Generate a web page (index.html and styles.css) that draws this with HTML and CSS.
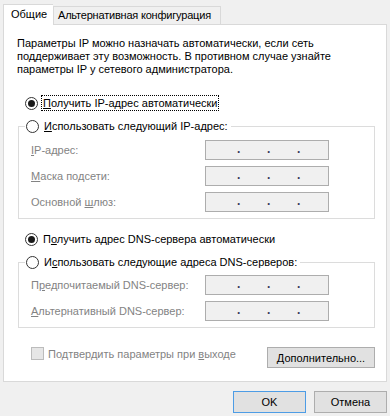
FILE: index.html
```html
<!DOCTYPE html>
<html lang="ru">
<head>
<meta charset="utf-8">
<link rel="stylesheet" href="styles.css">
</head>
<body>
<div class="dialog">
  <div class="tabs">
    <div class="tab active">Общие</div>
    <div class="tab">Альтернативная конфигурация</div>
  </div>
  <div class="panel">
    <p class="intro">Параметры IP можно назначать автоматически, если сеть поддерживает эту возможность. В противном случае узнайте параметры IP у сетевого администратора.</p>

    <div class="radio-row first">
      <span class="radio checked"></span>
      <span class="rlabel focus"><u>П</u>олучить IP-адрес автоматически</span>
    </div>

    <fieldset class="group">
      <legend class="radio-row">
        <span class="radio"></span>
        <span class="rlabel"><u>И</u>спользовать следующий IP-адрес:</span>
      </legend>
      <div class="rows">
        <div class="field"><span class="flabel"><u>I</u>P-адрес:</span><span class="ipbox"><span class="dot">.</span><span class="dot">.</span><span class="dot">.</span></span></div>
        <div class="field"><span class="flabel"><u>М</u>аска подсети:</span><span class="ipbox"><span class="dot">.</span><span class="dot">.</span><span class="dot">.</span></span></div>
        <div class="field"><span class="flabel">Основной <u>ш</u>люз:</span><span class="ipbox"><span class="dot">.</span><span class="dot">.</span><span class="dot">.</span></span></div>
      </div>
    </fieldset>

    <div class="radio-row dns">
      <span class="radio checked"></span>
      <span class="rlabel">П<u>о</u>лучить адрес DNS-сервера автоматически</span>
    </div>

    <fieldset class="group">
      <legend class="radio-row">
        <span class="radio"></span>
        <span class="rlabel">И<u>с</u>пользовать следующие адреса DNS-серверов:</span>
      </legend>
      <div class="rows dnsrows">
        <div class="field"><span class="flabel">П<u>р</u>едпочитаемый DNS-сервер:</span><span class="ipbox"><span class="dot">.</span><span class="dot">.</span><span class="dot">.</span></span></div>
        <div class="field"><span class="flabel"><u>А</u>льтернативный DNS-сервер:</span><span class="ipbox"><span class="dot">.</span><span class="dot">.</span><span class="dot">.</span></span></div>
      </div>
    </fieldset>

    <div class="bottom-row">
      <div class="check-wrap">
        <span class="checkbox"></span>
        <span class="clabel">Подтвердить параметры при <u>в</u>ыходе</span>
      </div>
      <button class="btn adv"><u>Д</u>ополнительно...</button>
    </div>
  </div>
  <div class="actions">
    <button class="btn main default">OK</button>
    <button class="btn main">Отмена</button>
  </div>
</div>
</body>
</html>
```
FILE: styles.css
```css
* { box-sizing: border-box; }
html, body { margin: 0; padding: 0; }
body {
  width: 390px;
  height: 416px;
  background: #f0f0f0;
  font-family: "Liberation Sans", Arial, sans-serif;
  font-size: 11px;
  color: #000;
  overflow: hidden;
}
u { text-decoration: underline; text-underline-offset: 1px; }

.dialog { display: flex; flex-direction: column; }

.tabs {
  display: flex;
  align-items: flex-end;
  height: 25px;
  padding-left: 3px;
  padding-top: 4px;
  position: relative;
  z-index: 1;
}
.tab {
  height: 18px;
  width: 168px;
  padding: 0 0 0 4px;
  line-height: 16px;
  letter-spacing: -0.2px;
  background: #f0f0f0;
  border: 1px solid #d9d9d9;
  border-bottom: none;
  white-space: nowrap;
  margin-bottom: 1px;
}
.tab.active {
  height: 21px;
  width: 50px;
  padding: 0 0 0 7px;
  line-height: 19px;
  letter-spacing: 0;
  background: #fff;
  border-right: none;
  margin-bottom: 0;
}

.panel {
  margin-left: 3px;
  margin-top: -1px;
  width: 384px;
  height: 358px;
  background: #fff;
  border: 1px solid #d9d9d9;
  display: flex;
  flex-direction: column;
}

.intro {
  margin: 12px 14px 0 13px;
  line-height: 13px;
}

.radio-row {
  display: flex;
  align-items: center;
  height: 16px;
}
.radio-row.first { margin-top: 19px; margin-left: 21px; }
.radio-row.dns { margin-top: 12px; margin-left: 21px; }

.radio {
  width: 13px;
  height: 13px;
  border: 1px solid #333;
  border-radius: 50%;
  background: #fff;
  display: flex;
  align-items: center;
  justify-content: center;
  flex: none;
}
.radio.checked::after {
  content: "";
  width: 7px;
  height: 7px;
  border-radius: 50%;
  background: #1a1a1a;
}
.rlabel {
  margin-left: 3px;
  padding: 0 1px;
  line-height: 14px;
  border: 1px dotted transparent;
}
.rlabel.focus { border-color: #000; }

.group {
  margin: 7px 0 0 14px;
  width: 357px;
  padding: 0 0 6px 12px;
  border: 1px solid #dcdcdc;
  min-inline-size: 0;
}
.group legend {
  padding: 0 1px;
  margin-left: -6px;
}
.rows {
  display: flex;
  flex-direction: column;
  gap: 6px;
  padding-top: 6px;
}
.rows.dnsrows { padding-top: 5px; }

.field {
  display: flex;
  align-items: center;
  height: 20px;
}
.flabel {
  width: 174px;
  color: #838383;
  flex: none;
}
.ipbox {
  width: 124px;
  height: 20px;
  border: 1px solid #adadad;
  background: #f0f0f0;
  display: flex;
  padding-left: 31px;
  gap: 27px;
  color: #3a3a5a;
  font-size: 12px;
  font-weight: bold;
}
.dot { width: 3px; line-height: 16px; }

.bottom-row {
  margin-top: 19px;
  margin-left: 27px;
  width: 344px;
  display: flex;
  justify-content: space-between;
  align-items: flex-start;
}
.check-wrap { display: flex; align-items: center; height: 13px; }
.checkbox {
  width: 13px;
  height: 13px;
  border: 1px solid #bcbcbc;
  background: #e6e6e6;
  flex: none;
}
.clabel { margin-left: 4px; color: #838383; }

.btn {
  font-family: inherit;
  font-size: 11px;
  color: #000;
  background: #e1e1e1;
  border: 1px solid #adadad;
  padding: 0;
  margin: 0;
  height: 21px;
  line-height: 18px;
}
.btn.adv { width: 108px; height: 21px; }

.actions {
  display: flex;
  justify-content: flex-end;
  gap: 8px;
  padding-right: 3px;
  margin-top: 9px;
}
.btn.main { width: 73px; height: 22px; }
.btn.default { border-color: #4d9ce5; }
```
